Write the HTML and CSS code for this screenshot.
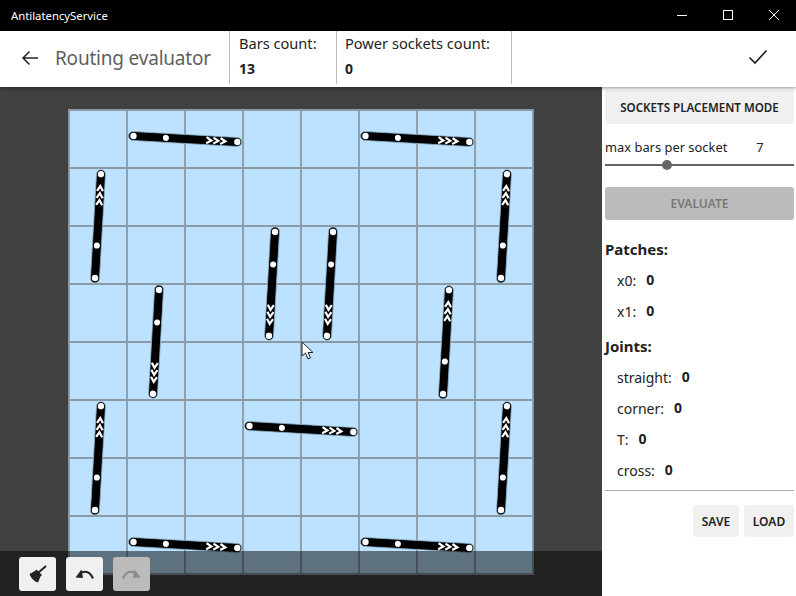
FILE: index.html
```html
<!DOCTYPE html>
<html lang="en">
<head>
    <meta charset="UTF-8">
    <title>AntilatencyService</title>
    <link rel="stylesheet" href="styles.css">
</head>
<body>
    <div class="titlebar">
        <span class="app-name">AntilatencyService</span>
        <div class="window-controls">
            <svg width="46" height="31" viewBox="0 0 46 31"><path d="M18 15.5H28" class="win-line"/></svg>
            <svg width="46" height="31" viewBox="0 0 46 31"><rect x="18.5" y="10.5" width="9" height="9" class="win-line"/></svg>
            <svg width="46" height="31" viewBox="0 0 46 31"><path d="M18 10L28 20M28 10L18 20" class="win-line"/></svg>
        </div>
    </div>

    <header class="topbar">
        <svg class="back" width="18" height="16" viewBox="0 0 18 16"><path d="M17 8H2M8.500 1.500L2 8l6.500 6.500" fill="none" stroke="#222" stroke-width="1.500"/></svg>
        <h1 class="page-title">Routing evaluator</h1>
        <div class="stat stat-bars">
            <span>Bars count:</span>
            <b>13</b>
        </div>
        <div class="stat stat-sockets">
            <span>Power sockets count:</span>
            <b>0</b>
        </div>
        <svg class="accept" width="20" height="16" viewBox="0 0 20 16"><path d="M1.500 8.500L7 14L18.500 1.500" fill="none" stroke="#222" stroke-width="1.700"/></svg>
    </header>

    <div class="main">
        <div class="stage">
            <svg class="board" width="466" height="466" viewBox="68 109 466 466">
                <defs>
                    <g id="bar">
                        <rect x="-5" y="-4.500" width="113.500" height="9" rx="4.500" fill="#000" stroke="#8fb4cf" stroke-width="0.800"/>
                        <circle cx="0" cy="0" r="3.200" fill="#fff"/>
                        <circle cx="32.500" cy="0" r="3" fill="#fff"/>
                        <circle cx="104" cy="0" r="3.200" fill="#fff"/>
                        <path d="M73 -3L78 0L73 3M80 -3L85 0L80 3M87 -3L92 0L87 3" fill="none" stroke="#fff" stroke-width="2.200"/>
                    </g>
                </defs>
                <rect x="69" y="110" width="464" height="464" fill="#bde2ff"/>
                <path class="grid-lines" d="M69 109V575M127 109V575M185 109V575M243 109V575M301 109V575M359 109V575M417 109V575M475 109V575M533 109V575M68 110H534M68 168H534M68 226H534M68 284H534M68 342H534M68 400H534M68 458H534M68 516H534M68 574H534"/>
                <use href="#bar" transform="translate(133.500 136) rotate(3.300)"/>
                <use href="#bar" transform="translate(365.500 136) rotate(3.300)"/>
                <use href="#bar" transform="translate(249.500 426) rotate(3.300)"/>
                <use href="#bar" transform="translate(133.500 542) rotate(3.300)"/>
                <use href="#bar" transform="translate(365.500 542) rotate(3.300)"/>
                <use href="#bar" transform="translate(275 232) rotate(93.300)"/>
                <use href="#bar" transform="translate(333 232) rotate(93.300)"/>
                <use href="#bar" transform="translate(159 290) rotate(93.300)"/>
                <use href="#bar" transform="translate(95 278) rotate(-86.700)"/>
                <use href="#bar" transform="translate(501 278) rotate(-86.700)"/>
                <use href="#bar" transform="translate(443 394) rotate(-86.700)"/>
                <use href="#bar" transform="translate(95 510) rotate(-86.700)"/>
                <use href="#bar" transform="translate(501 510) rotate(-86.700)"/>
            </svg>

            <svg class="cursor" width="14" height="20" viewBox="0 0 14 20"><path d="M1 1V15L4.500 12L7 18L9.500 17L7 11.500H12Z" fill="#fff" stroke="#222" stroke-width="1"/></svg>

            <div class="toolbar">
                <button class="tool">
                    <svg width="18" height="18" viewBox="0 0 18 18"><path d="M9.500 7.500L17 1" fill="none" stroke="#222" stroke-width="2"/><path d="M7.500 4.500L13 10L11.500 11.500L9 17.500C5.500 16.500 2 13.500 0.500 9L6 6Z" fill="#222"/></svg>
                </button>
                <button class="tool">
                    <svg width="19" height="11" viewBox="0 0 19 11"><path d="M0.500 8.500L6.500 0.500L8 9Z" fill="#222"/><path d="M5 4.500C9 1.500 15 2 18 9.500" fill="none" stroke="#222" stroke-width="2.200"/></svg>
                </button>
                <button class="tool tool-off">
                    <svg width="19" height="11" viewBox="0 0 19 11"><path d="M18.500 8.500L12.500 0.500L11 9Z" fill="#8a8a8a"/><path d="M14 4.500C10 1.500 4 2 1 9.500" fill="none" stroke="#8a8a8a" stroke-width="2.200"/></svg>
                </button>
            </div>
        </div>

        <aside class="panel">
            <button class="btn btn-mode">SOCKETS PLACEMENT MODE</button>
            <div class="max-bars">
                <span>max bars per socket</span>
                <span class="max-value">7</span>
            </div>
            <div class="slider"><div class="thumb"></div></div>
            <button class="btn btn-evaluate">EVALUATE</button>

            <h2 class="group-title">Patches:</h2>
            <div class="count"><span>x0:</span><b>0</b></div>
            <div class="count"><span>x1:</span><b>0</b></div>

            <h2 class="group-title group-joints">Joints:</h2>
            <div class="count"><span>straight:</span><b>0</b></div>
            <div class="count"><span>corner:</span><b>0</b></div>
            <div class="count"><span>T:</span><b>0</b></div>
            <div class="count"><span>cross:</span><b>0</b></div>

            <div class="panel-actions">
                <button class="btn btn-save">SAVE</button>
                <button class="btn btn-load">LOAD</button>
            </div>
        </aside>
    </div>
</body>
</html>
```
FILE: styles.css
```css
* {
    box-sizing: border-box;
}

html, body {
    margin: 0;
    height: 100%;
    overflow: hidden;
}

body {
    background-color: #fff;
    color: #222;
    font-family: "Noto Sans", "Open Sans", sans-serif;
    display: flex;
    flex-direction: column;
}

button {
    font-family: inherit;
    border: none;
    padding: 0;
}

.titlebar {
    height: 31px;
    background-color: #000;
    color: #fff;
    display: flex;
    align-items: center;
    justify-content: space-between;
}

.app-name {
    font-size: 11.300px;
    margin-left: 11px;
}

.window-controls {
    display: flex;
    margin-right: -1px;
}

.window-controls svg {
    display: block;
}

.win-line {
    fill: none;
    stroke: #fff;
    stroke-width: 1;
}

.topbar {
    height: 56px;
    display: flex;
    align-items: flex-start;
    position: relative;
    z-index: 2;
    box-shadow: 0 1px 4px rgba(0, 0, 0, 0.45);
    background-color: #fff;
}

.back {
    margin: 19px 0 0 21px;
}

.page-title {
    margin: 12px 0 0 16px;
    width: 174px;
    font-size: 19px;
    letter-spacing: -0.2px;
    font-weight: 400;
    color: #5f5f5f;
    line-height: 30px;
    white-space: nowrap;
}

.stat {
    height: 53px;
    border-left: 1px solid #bbb;
    padding: 1px 0 0 9px;
    font-size: 14.600px;
    line-height: 22px;
    display: flex;
    flex-direction: column;
    gap: 4px;
    white-space: nowrap;
}

.stat b {
    font-size: 14px;
}

.stat-bars {
    width: 107px;
}

.stat-sockets {
    width: 176px;
    padding-left: 8px;
    border-right: 1px solid #bbb;
}

.accept {
    margin: 18px 0 0 236px;
}

.main {
    flex: 1;
    display: flex;
    min-height: 0;
}

.stage {
    width: 602px;
    position: relative;
    background-color: #404241;
    padding: 22px 0 0 68px;
    overflow: hidden;
}

.board {
    display: block;
}

.grid-lines {
    stroke: #8b9aa6;
    stroke-width: 1.800;
    fill: none;
}

.cursor {
    position: absolute;
    left: 301px;
    top: 254px;
}

.toolbar {
    position: absolute;
    left: 0;
    right: 0;
    bottom: 0;
    height: 45px;
    background-color: rgba(0, 0, 0, 0.5);
    display: flex;
    gap: 10px;
    padding: 6px 0 0 19px;
}

.tool {
    width: 37px;
    height: 34px;
    border-radius: 3px;
    background-color: #f0f0f0;
    display: flex;
    align-items: center;
    justify-content: center;
}

.tool-off {
    background-color: #bbb;
}

.panel {
    width: 194px;
    padding: 3px 2px 0 3px;
    font-size: 14px;
}

.btn {
    display: block;
    background-color: #f0f0f0;
    color: #222;
    border-radius: 3px;
    font-weight: 600;
    font-size: 12px;
}

.btn-mode {
    width: 100%;
    height: 34px;
    font-size: 11.600px;
}

.max-bars {
    display: flex;
    margin-top: 13px;
    line-height: 20px;
    font-size: 12.900px;
}

.max-value {
    margin-left: 29px;
}

.slider {
    height: 1.500px;
    margin: 7px 0 0;
    background-color: #666;
    position: relative;
}

.thumb {
    position: absolute;
    left: 56.500px;
    top: -4px;
    width: 10px;
    height: 10px;
    border-radius: 50%;
    background-color: #666;
}

.btn-evaluate {
    width: 100%;
    height: 33px;
    margin-top: 21.500px;
    background-color: #bbb;
    color: #777;
}

.group-title {
    margin: 19px 0 0;
    font-size: 15px;
    font-weight: 700;
    line-height: 20px;
}

.group-joints {
    margin-top: 14px;
}

.count {
    display: flex;
    gap: 10px;
    margin: 11px 0 0 12px;
    line-height: 20px;
    height: 20px;
}

.group-title + .count {
    margin-top: 12px;
}

.count b {
    font-size: 14px;
    line-height: 18px;
}

.panel-actions {
    margin-top: 9px;
    padding-top: 14px;
    border-top: 1px solid #aaa;
    display: flex;
    justify-content: flex-end;
    gap: 5px;
}

.btn-save {
    width: 46px;
    height: 32px;
}

.btn-load {
    width: 50px;
    height: 32px;
}
```
